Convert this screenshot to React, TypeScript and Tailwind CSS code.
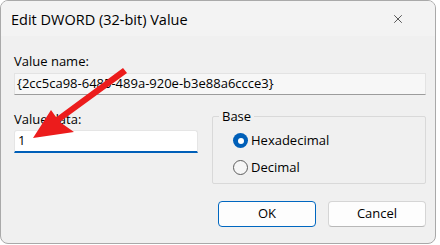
import { X } from 'lucide-react'

const font = { fontFamily: '"Open Sans", "Noto Sans", sans-serif' }

function Radio({ checked, label }: { checked?: boolean; label: string }) {
  return (
    <div className="flex items-center gap-[3px] h-[15px]">
      {checked ? (
        <span className="w-[15px] h-[15px] rounded-full bg-[#005fb8] flex items-center justify-center">
          <span className="w-[6px] h-[6px] rounded-full bg-white" />
        </span>
      ) : (
        <span className="w-[15px] h-[15px] rounded-full border border-[#5d5d5d] bg-[#f6f6f6]" />
      )}
      <span className="text-[13px] text-black leading-none">{label}</span>
    </div>
  )
}

export default function App() {
  return (
    <div className="w-[440px] h-[245px] bg-white relative" style={font}>
      <div className="w-[436px] h-[244px] border border-[#a9a9a9] rounded-[8px] bg-[#f0f0f0] overflow-hidden flex flex-col">
        {/* title bar */}
        <div className="h-[35px] bg-[#f3f3f3] flex items-center justify-between pl-[10px] pr-[30px] shrink-0">
          <span className="text-[14.5px] text-black pt-[2px]">Edit DWORD (32-bit) Value</span>
          <X size={14} strokeWidth={1.1} className="text-black" />
        </div>

        <div className="pl-[13px] pr-[9px] flex flex-col">
          <div className="text-[13px] text-black mt-[17px] leading-[16px]">Value name:</div>
          <div className="mt-[4px] h-[22px] bg-[#f7f7f7] border border-[#e3e3e3] border-b-[#9c9c9c] flex items-center pl-[2px] text-[13px] text-black">
            {'{2cc5ca98-6485-489a-920e-b3e88a6ccce3}'}
          </div>

          <div className="flex mt-[16px]">
            <div className="w-[184px] flex flex-col">
              <div className="text-[13px] text-black leading-[16px]">Value data:</div>
              <div className="mt-[3px] h-[23px] bg-white border border-[#e5e5e5] border-b-2 border-b-[#005fb8] rounded-t-[3px] flex items-center pl-[3px] text-[13px] text-black">
                1
              </div>
            </div>

            <div className="ml-[14px] flex-1 relative pt-[5px]">
              <div className="h-[68px] border border-[#d9d9d9] rounded-[2px] flex flex-col gap-[12px] pl-[20px] pt-[16px]">
                <Radio checked label="Hexadecimal" />
                <Radio label="Decimal" />
              </div>
              <span className="absolute left-[7px] -top-[3px] px-[3px] bg-[#f0f0f0] text-[13px] leading-[16px] text-black">Base</span>
            </div>
          </div>

          <div className="flex justify-end gap-[12px] mt-[17px]">
            <button className="w-[98px] h-[26px] bg-[#fdfdfd] border border-[#0067c0] rounded-[4px] text-[13px] text-black">OK</button>
            <button className="w-[98px] h-[26px] bg-[#fdfdfd] border border-[#d5d5d5] border-b-[#b8b8b8] rounded-[4px] text-[13px] text-black">Cancel</button>
          </div>
        </div>
      </div>

      {/* red annotation arrow */}
      <svg className="absolute left-0 top-0 pointer-events-none" width="440" height="245">
        <polygon
          points="33,138 74,132 59.8,122.1 127,73 123,68 56.2,117.3 51,110"
          fill="#ec1c1c"
        />
      </svg>
    </div>
  )
}
